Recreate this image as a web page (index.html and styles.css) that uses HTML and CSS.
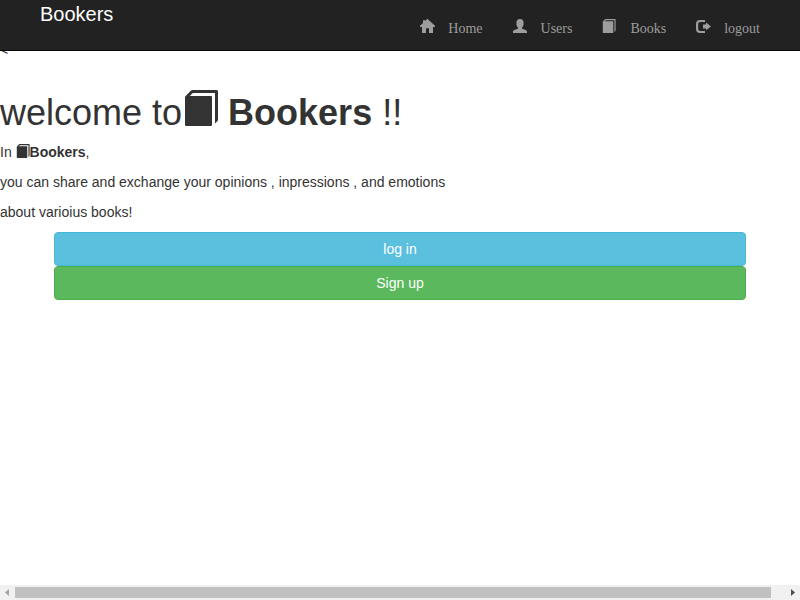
FILE: index.html
```
<!DOCTYPE html>
<html lang="en">
<head>
<meta charset="utf-8">
<title>Bookers</title>
<link rel="stylesheet" href="styles.css">
</head>
<body>
<svg class="symbols" aria-hidden="true">
  <symbol id="home" viewBox="0 0 14 14"><path d="M7.3 -.3L15 6.8V8H13V14H9V9.3H6V14H2V8H0V6.8L3 4V1.2H5V2Z"/></symbol>
  <symbol id="user" viewBox="0 0 14 14"><path d="M7 0C9.3 0 10.5 1.3 10.5 3.2V5.5C10.5 7 9.8 7.9 9 8.5V9.6L13 11.3Q14 11.8 14 12.6V14H0V12.6Q0 11.8 1 11.3L5 9.6V8.5C4.2 7.9 3.5 7 3.5 5.5V3.2C3.5 1.3 4.7 0 7 0Z"/></symbol>
  <symbol id="book" viewBox="0 0 36 36"><path d="M2 9.5V7.5Q2 6.8 2.5 6.2L7.7.8Q8.5 0 9.5 0H33.5Q35 0 35 1.5V29.5Q35 30.5 34.3 31.2L32 33.4V3H10.5Q9.7 3 9.1 3.6L7 6H28Q29 6 29 7V35Q29 36 28 36H3Q2 36 2 35Z"/></symbol>
  <symbol id="logout" viewBox="0 0 15 14"><path d="M9 1H4Q0 1 0 5V10Q0 14 4 14H9V12H4.2Q2.2 12 2.2 10V5Q2.2 3 4.2 3H9ZM10 3.5L15 7.5L10 11.3V9.5H7V5.5H10Z"/></symbol>
</svg>
<header class="navbar">
  <a class="brand">Bookers</a>
  <nav class="nav">
    <a class="nav-link"><svg class="nav-icon"><use href="#home"/></svg>Home</a>
    <a class="nav-link"><svg class="nav-icon"><use href="#user"/></svg>Users</a>
    <a class="nav-link"><svg class="nav-icon"><use href="#book"/></svg>Books</a>
    <a class="nav-link"><svg class="nav-icon nav-icon-wide"><use href="#logout"/></svg>logout</a>
  </nav>
</header>
<main class="content">
  <div class="stray">&lt;</div>
  <h1>welcome to<svg class="book"><use href="#book"/></svg> <strong>Bookers</strong> !!</h1>
  <p>In <svg class="book"><use href="#book"/></svg><strong>Bookers</strong>,</p>
  <p>you can share and exchange your opinions , inpressions , and emotions</p>
  <p>about varioius books!</p>
  <div class="actions">
    <a class="btn btn-info">log in</a>
    <a class="btn btn-success">Sign up</a>
  </div>
</main>
<div class="scrollbar">
  <svg class="arrow" viewBox="0 0 15 15"><path class="arrow-off" d="M9 4V11L5 7.5Z"/></svg>
  <div class="track"><div class="thumb"></div></div>
  <svg class="arrow" viewBox="0 0 15 15"><path class="arrow-on" d="M6 4V11L10 7.5Z"/></svg>
</div>
</body>
</html>
```
FILE: styles.css
```
* { box-sizing: border-box; }
body {
  margin: 0;
  height: 600px;
  overflow: hidden;
  display: flex;
  flex-direction: column;
  font: 14px/20px "Liberation Sans", Arial, sans-serif;
  color: #333;
  background: #fff;
}
symbol { overflow: visible; }
.symbols { position: absolute; width: 0; height: 0; }
.navbar {
  position: relative;
  z-index: 1;
  flex: none;
  height: 51px;
  padding: 0 40px;
  display: flex;
  justify-content: space-between;
  background: #222;
  border-bottom: 1px solid #080808;
}
.brand { font-size: 20px; line-height: 20px; padding-top: 4px; color: #fff; }
.nav {
  display: flex;
  gap: 30px;
  padding-top: 19px;
  font-family: "Liberation Serif", serif;
  color: #9d9d9d;
}
.nav-link { display: flex; }
.nav-icon { width: 14px; height: 14px; margin: 0 14px 0 0; fill: currentColor; overflow: visible; }
.nav-icon-wide { width: 15px; margin-right: 13px; }
.content { flex: 1; margin-top: -11px; }
.stray { height: 20px; }
h1 { height: 40px; margin: 30px 0 12px; font-size: 36px; font-weight: 400; line-height: 40px; }
p { height: 20px; margin: 0 0 10px; }
.book { width: 1em; height: 1em; fill: currentColor; vertical-align: -1px; }
h1 .book { margin: 0 -1px 0 1px; }
.actions { margin: 0 54px; }
.btn {
  display: block;
  height: 34px;
  padding: 6px 12px;
  border: 1px solid;
  border-radius: 4px;
  text-align: center;
  color: #fff;
}
.btn-info { background: #5bc0de; border-color: #46b8da; }
.btn-success { background: #5cb85c; border-color: #4cae4c; }
.scrollbar { flex: none; height: 15px; display: flex; background: #f1f1f1; }
.arrow { width: 15px; height: 15px; }
.arrow-off { fill: #a3a3a3; }
.arrow-on { fill: #505050; }
.track { flex: 1; padding: 2px 0; }
.thumb { width: 756px; height: 11px; background: #c1c1c1; }
```
